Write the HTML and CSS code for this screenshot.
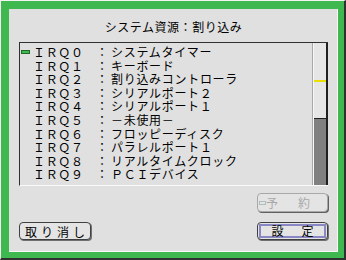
FILE: index.html
```html
<!DOCTYPE html>
<html lang="ja">
<head>
<meta charset="utf-8">
<link rel="stylesheet" href="styles.css">
</head>
<body>
<div class="frame">
  <div class="panel">
    <div class="title">システム資源：割り込み</div>
    <div class="listbox">
      <div class="rows">
        <div class="row"><span class="mark"><i class="sel"></i></span><span class="lbl">ＩＲＱ０</span><span class="col">：</span><span class="desc">システムタイマー</span></div>
        <div class="row"><span class="mark"></span><span class="lbl">ＩＲＱ１</span><span class="col">：</span><span class="desc">キーボード</span></div>
        <div class="row"><span class="mark"></span><span class="lbl">ＩＲＱ２</span><span class="col">：</span><span class="desc">割り込みコントローラ</span></div>
        <div class="row"><span class="mark"></span><span class="lbl">ＩＲＱ３</span><span class="col">：</span><span class="desc">シリアルポート２</span></div>
        <div class="row"><span class="mark"></span><span class="lbl">ＩＲＱ４</span><span class="col">：</span><span class="desc">シリアルポート１</span></div>
        <div class="row"><span class="mark"></span><span class="lbl">ＩＲＱ５</span><span class="col">：</span><span class="desc">－未使用－</span></div>
        <div class="row"><span class="mark"></span><span class="lbl">ＩＲＱ６</span><span class="col">：</span><span class="desc">フロッピーディスク</span></div>
        <div class="row"><span class="mark"></span><span class="lbl">ＩＲＱ７</span><span class="col">：</span><span class="desc">パラレルポート１</span></div>
        <div class="row"><span class="mark"></span><span class="lbl">ＩＲＱ８</span><span class="col">：</span><span class="desc">リアルタイムクロック</span></div>
        <div class="row"><span class="mark"></span><span class="lbl">ＩＲＱ９</span><span class="col">：</span><span class="desc">ＰＣＩデバイス</span></div>
      </div>
      <div class="scrollbar">
        <div class="track"><div class="pos"></div></div>
        <div class="thumb"></div>
      </div>
    </div>
    <div class="reserve-row">
      <div class="btn disabled"><svg class="dots" width="7" height="4" viewBox="0 0 7 4"><rect x="0.5" y="0.5" width="6" height="3" fill="none" stroke="#7a9a9a" stroke-width="1" stroke-dasharray="1 1"/></svg><span class="rtext">予　約</span></div>
    </div>
    <div class="bottom-row">
      <div class="btn cancel">取り消し</div>
      <div class="btn default"><span class="inner">設　定</span></div>
    </div>
  </div>
</div>
</body>
</html>
```
FILE: styles.css
```css
html, body {
  margin: 0;
  padding: 0;
  width: 346px;
  height: 260px;
  overflow: hidden;
  background: #e0e0e0;
}
body {
  font-family: "Noto Sans CJK JP", "Noto Sans", sans-serif;
  color: #000;
}
.frame {
  box-sizing: border-box;
  width: 346px;
  height: 260px;
  border-style: solid;
  border-width: 1px 2px 2px 1px;
  border-color: #f4f4f4 #303030 #303030 #f4f4f4;
  background: #3fb94f;
  padding: 8px 6px 6px 8px;
}
.panel {
  box-sizing: border-box;
  height: 100%;
  background: #e0e0e0;
  border-right: 1px solid #f8f8f8;
  border-bottom: 1px solid #f8f8f8;
  padding: 0 9px 0 10px;
  display: flex;
  flex-direction: column;
}
.title {
  margin-top: 10px;
  height: 16px;
  line-height: 16px;
  font-size: 12px;
  letter-spacing: 0.55px;
  text-align: center;
}
.listbox {
  margin-top: 7px;
  box-sizing: border-box;
  height: 144px;
  display: flex;
  border-top: 1px solid #303030;
  border-left: 1px solid #303030;
  border-bottom: 1px solid #fafafa;
}
.rows {
  flex: 1;
  padding-top: 2px;
  border-right: 1px solid #a8a8a8;
}
.row {
  display: flex;
  height: 13.6px;
  line-height: 13.6px;
  font-size: 12px;
  white-space: nowrap;
}
.mark {
  width: 13px;
  display: flex;
  align-items: center;
}
.sel {
  display: block;
  margin-left: 1px;
  width: 7px;
  height: 2px;
  background: #3fb94f;
  border: 1px solid #1f6a2a;
}
.lbl {
  width: 63px;
  letter-spacing: 0.67px;
}
.col {
  width: 15px;
}
.desc {
  letter-spacing: 0.7px;
}
.scrollbar {
  width: 15px;
  box-sizing: border-box;
  border-left: 1px solid #f8f8f8;
  border-right: 2px solid #202020;
  display: flex;
  flex-direction: column;
}
.track {
  height: 75px;
  background: #e6e6e6;
  position: relative;
}
.pos {
  position: absolute;
  left: 0;
  right: 0;
  top: 37px;
  height: 2px;
  background: #e8e000;
}
.thumb {
  flex: 1;
  background: #808080;
  border-top: 1px solid #202020;
}
.reserve-row {
  margin-top: 7px;
  display: flex;
  justify-content: flex-end;
}
.btn {
  box-sizing: border-box;
  height: 19px;
  border: 1px solid #404040;
  border-radius: 4px;
  box-shadow: 1px 1px 0 #707070;
  background: #e4e4e4;
  font-size: 12px;
  line-height: 17px;
  display: flex;
  align-items: center;
  justify-content: center;
  white-space: nowrap;
}
.disabled {
  width: 71px;
  border-color: #a8a8a8;
  box-shadow: 1px 1px 0 #606060;
  color: #a8a8a8;
  justify-content: flex-start;
  padding-left: 1px;
}
.dots {
  margin-right: 0;
}
.rtext {
  letter-spacing: 4px;
}
.bottom-row {
  margin-top: 10px;
  display: flex;
  justify-content: space-between;
}
.cancel {
  width: 72px;
  height: 18px;
  letter-spacing: 4px;
  padding-left: 4px;
}
.default {
  width: 71px;
  height: 18px;
  padding: 1px;
}
.inner {
  box-sizing: border-box;
  width: 100%;
  height: 100%;
  border: 2px solid #8a88c4;
  display: flex;
  align-items: center;
  justify-content: center;
  letter-spacing: 3px;
  padding-left: 3px;
  line-height: 12px;
}
```
